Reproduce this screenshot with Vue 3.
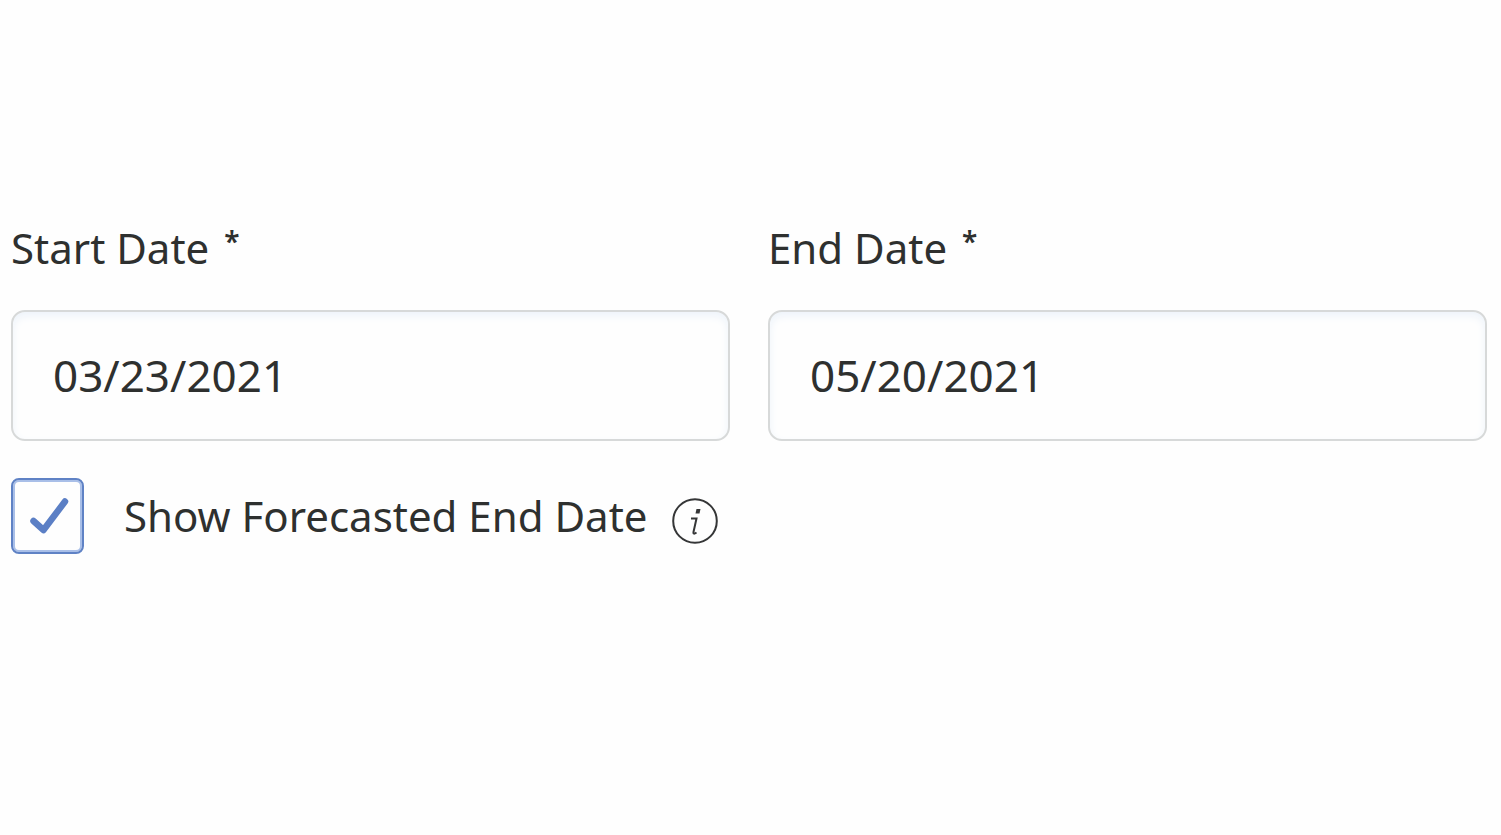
<script setup>
import { ref } from 'vue'

const startDate = ref('03/23/2021')
const endDate = ref('05/20/2021')
const showForecast = ref(true)
</script>

<template>
  <form class="dates" @submit.prevent>
    <div class="fields">
      <div class="field">
        <label for="start-date">Start Date <span class="required">*</span></label>
        <input id="start-date" v-model="startDate" type="text" required />
      </div>
      <div class="field">
        <label for="end-date">End Date <span class="required">*</span></label>
        <input id="end-date" v-model="endDate" type="text" required />
      </div>
    </div>
    <div class="option">
      <span class="check">
        <input id="show-forecast" v-model="showForecast" type="checkbox" />
        <svg v-if="showForecast" class="tick" viewBox="0 0 73 76" aria-hidden="true">
          <path d="M22.5 43 L32.5 52 L54 23.5" />
        </svg>
      </span>
      <label for="show-forecast">Show Forecasted End Date</label>
      <button class="info" type="button" aria-label="About forecasted end date">
        <svg viewBox="0 0 46 46" aria-hidden="true">
          <circle cx="23" cy="23" r="21.8" />
          <path class="stem" d="M19 20.5 H24.5 L21.5 34 Q21 37 24.5 34.5" />
          <path class="dot" d="M24.5 11 h4 l-1 4.5 h-4 z" />
        </svg>
      </button>
    </div>
  </form>
</template>

<style>
body {
  background: #fefefe;
}
</style>

<style scoped>
.dates {
  padding: 218px 14px 0 11px;
  color: #2e302f;
  font-family: "Noto Sans", sans-serif;
  font-size: 42px;
  line-height: 60px;
}

.fields {
  display: grid;
  grid-template-columns: 1fr 1fr;
  gap: 38px;
}

.field {
  display: flex;
  flex-direction: column;
  gap: 32px;
  min-width: 0;
}

.field label {
  height: 60px;
}

.required {
  margin-left: 4px;
  font-size: 28px;
  font-weight: 600;
  line-height: 28px;
  vertical-align: 12px;
}

.field input {
  box-sizing: border-box;
  width: 100%;
  height: 131px;
  padding: 0 40px 2px;
  border: 2px solid #d7d9d9;
  border-radius: 14px;
  background: #fefefe;
  box-shadow: inset 0 4px 8px #edf3fa;
  color: inherit;
  font: inherit;
  font-size: 44px;
  outline: none;
}

.option {
  display: flex;
  align-items: center;
  margin-top: 37px;
}

.check {
  position: relative;
  display: flex;
  width: 73px;
  height: 76px;
  margin-right: 40px;
}

.check input {
  appearance: none;
  box-sizing: border-box;
  width: 100%;
  height: 100%;
  margin: 0;
  border: 2px solid #5f82c5;
  border-radius: 8px;
  background: #fefefe;
  box-shadow: inset 0 0 0 2px #a9bfe8;
}

.tick {
  position: absolute;
  inset: 0;
  width: 100%;
  height: 100%;
  pointer-events: none;
  fill: none;
  stroke: #5b7fc5;
  stroke-width: 6.5;
  stroke-linecap: round;
  stroke-linejoin: round;
}

.info {
  display: flex;
  width: 46px;
  height: 46px;
  margin: 10px 0 0 24px;
  padding: 0;
  border: 0;
  background: none;
}

.info svg {
  width: 46px;
  height: 46px;
  fill: none;
  stroke: #353637;
  stroke-width: 2;
}

.info .dot {
  fill: #353637;
  stroke: none;
}
</style>
